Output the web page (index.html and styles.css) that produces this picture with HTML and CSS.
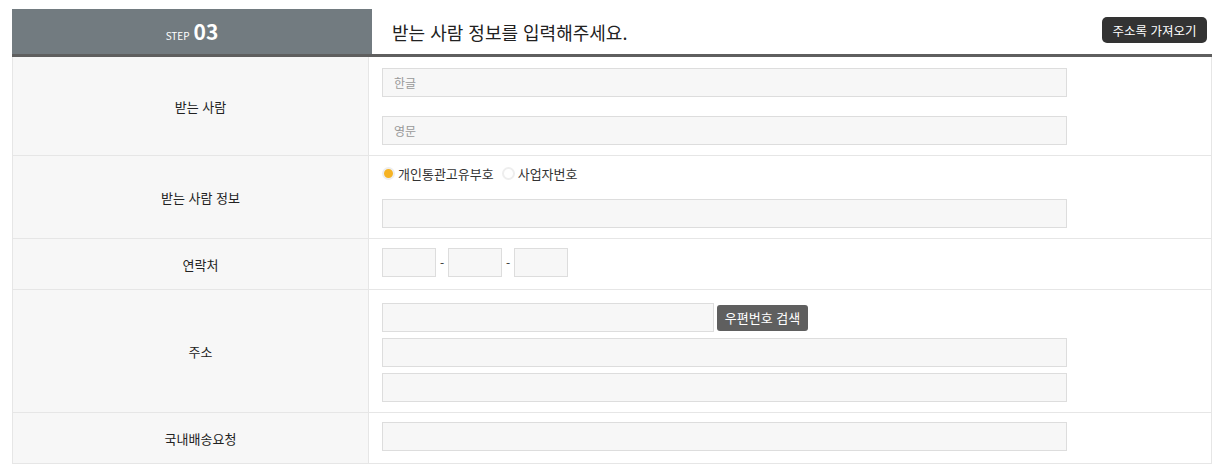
FILE: index.html
```html
<!DOCTYPE html>
<html lang="ko">
<head>
    <meta charset="UTF-8">
    <meta name="viewport" content="width=device-width, initial-scale=1.0">
    <title>받는 사람 정보</title>
    <link rel="stylesheet" href="styles.css">
</head>
<body>
    <div class="wrap">
        <div class="step-head">
            <div class="step-no"><span class="step-label">STEP</span><span class="step-num">03</span></div>
            <h2 class="step-title">받는 사람 정보를 입력해주세요.</h2>
            <button class="btn-book">주소록 가져오기</button>
        </div>

        <div class="form-table">
            <div class="form-row">
                <div class="form-label">받는 사람</div>
                <div class="form-value row-name">
                    <input type="text" class="field" placeholder="한글">
                    <input type="text" class="field gap-lg" placeholder="영문">
                </div>
            </div>

            <div class="form-row">
                <div class="form-label">받는 사람 정보</div>
                <div class="form-value row-info">
                    <div class="radios">
                        <label class="radio"><span class="dot checked"></span>개인통관고유부호</label>
                        <label class="radio"><span class="dot"></span>사업자번호</label>
                    </div>
                    <input type="text" class="field">
                </div>
            </div>

            <div class="form-row">
                <div class="form-label">연락처</div>
                <div class="form-value">
                    <div class="phone">
                        <input type="text" class="field small">
                        <span class="dash">-</span>
                        <input type="text" class="field small">
                        <span class="dash">-</span>
                        <input type="text" class="field small">
                    </div>
                </div>
            </div>

            <div class="form-row">
                <div class="form-label">주소</div>
                <div class="form-value row-addr">
                    <div class="zip">
                        <input type="text" class="field zip-field">
                        <button class="btn-zip">우편번호 검색</button>
                    </div>
                    <input type="text" class="field gap-sm">
                    <input type="text" class="field gap-sm">
                </div>
            </div>

            <div class="form-row">
                <div class="form-label">국내배송요청</div>
                <div class="form-value">
                    <input type="text" class="field">
                </div>
            </div>
        </div>
    </div>
</body>
</html>
```

FILE: styles.css
```css
body {
    margin: 0;
    font-family: "Noto Sans CJK KR", "Noto Sans", sans-serif;
    color: #333;
    background-color: #fff;
}

.wrap {
    width: 1200px;
    padding: 9px 12px;
}

/* header */
.step-head {
    display: flex;
    align-items: center;
    height: 45px;
    border-bottom: 3px solid #5f5f5f;
}

.step-no {
    width: 360px;
    height: 45px;
    background-color: #727b80;
    color: #fff;
    display: flex;
    align-items: baseline;
    justify-content: center;
    padding-top: 10px;
    box-sizing: border-box;
}

.step-label {
    font-size: 10px;
    margin-right: 4px;
}

.step-num {
    font-size: 21px;
    font-weight: 600;
    line-height: 24px;
}

.step-title {
    margin: 0 0 0 20px;
    font-size: 18px;
    font-weight: normal;
    color: #222;
}

.btn-book {
    margin-left: auto;
    margin-right: 5px;
    align-self: flex-start;
    margin-top: 8px;
    height: 26px;
    width: 105px;
    padding: 0;
    border: none;
    border-radius: 5px;
    background-color: #333;
    color: #fff;
    font-family: inherit;
    font-size: 12.5px;
}

/* form */
.form-table {
    border-left: 1px solid #e6e6e6;
    border-right: 1px solid #e6e6e6;
}

.form-row {
    display: grid;
    grid-template-columns: 356px 1fr;
    border-bottom: 1px solid #e6e6e6;
}

.form-label {
    background-color: #f7f7f7;
    border-right: 1px solid #e6e6e6;
    display: flex;
    align-items: center;
    justify-content: center;
    padding-left: 20px;
    font-size: 13px;
    color: #222;
}

.form-value {
    padding: 9px 13px 12px;
    display: flex;
    flex-direction: column;
    align-items: flex-start;
}

.row-name {
    padding-top: 11px;
    padding-bottom: 10px;
}

.row-info {
    padding-top: 7px;
    padding-bottom: 10px;
}

.row-addr {
    padding-top: 13px;
    padding-bottom: 10px;
}

.field {
    box-sizing: border-box;
    width: 685px;
    height: 29px;
    padding: 0 11px;
    border: 1px solid #ddd;
    background-color: #f7f7f7;
    font-family: inherit;
    font-size: 12px;
    color: #333;
    outline: none;
}

.field::placeholder {
    color: #999;
}

.gap-lg {
    margin-top: 19px;
}

.gap-sm {
    margin-top: 6px;
}

.radios {
    display: flex;
    height: 20px;
    align-items: center;
    margin-bottom: 16px;
}

.radio {
    display: flex;
    align-items: center;
    font-size: 13px;
    color: #333;
    margin-right: 8px;
}

.dot {
    box-sizing: border-box;
    width: 13px;
    height: 13px;
    border-radius: 50%;
    border: 2px solid #eee;
    background-color: #fff;
    margin-right: 3px;
}

.dot.checked {
    background-color: #f6b323;
}

.phone {
    display: flex;
    align-items: center;
}

.field.small {
    width: 54px;
}

.dash {
    font-size: 12px;
    margin: 0 4px;
    width: 4px;
    text-align: center;
}

.zip {
    display: flex;
    align-items: center;
}

.field.zip-field {
    width: 332px;
}

.btn-zip {
    margin-left: 3px;
    height: 26px;
    width: 91px;
    border: none;
    border-radius: 3px;
    background-color: #5f5f5f;
    color: #fff;
    font-family: inherit;
    font-size: 13px;
    padding: 0;
}
```
